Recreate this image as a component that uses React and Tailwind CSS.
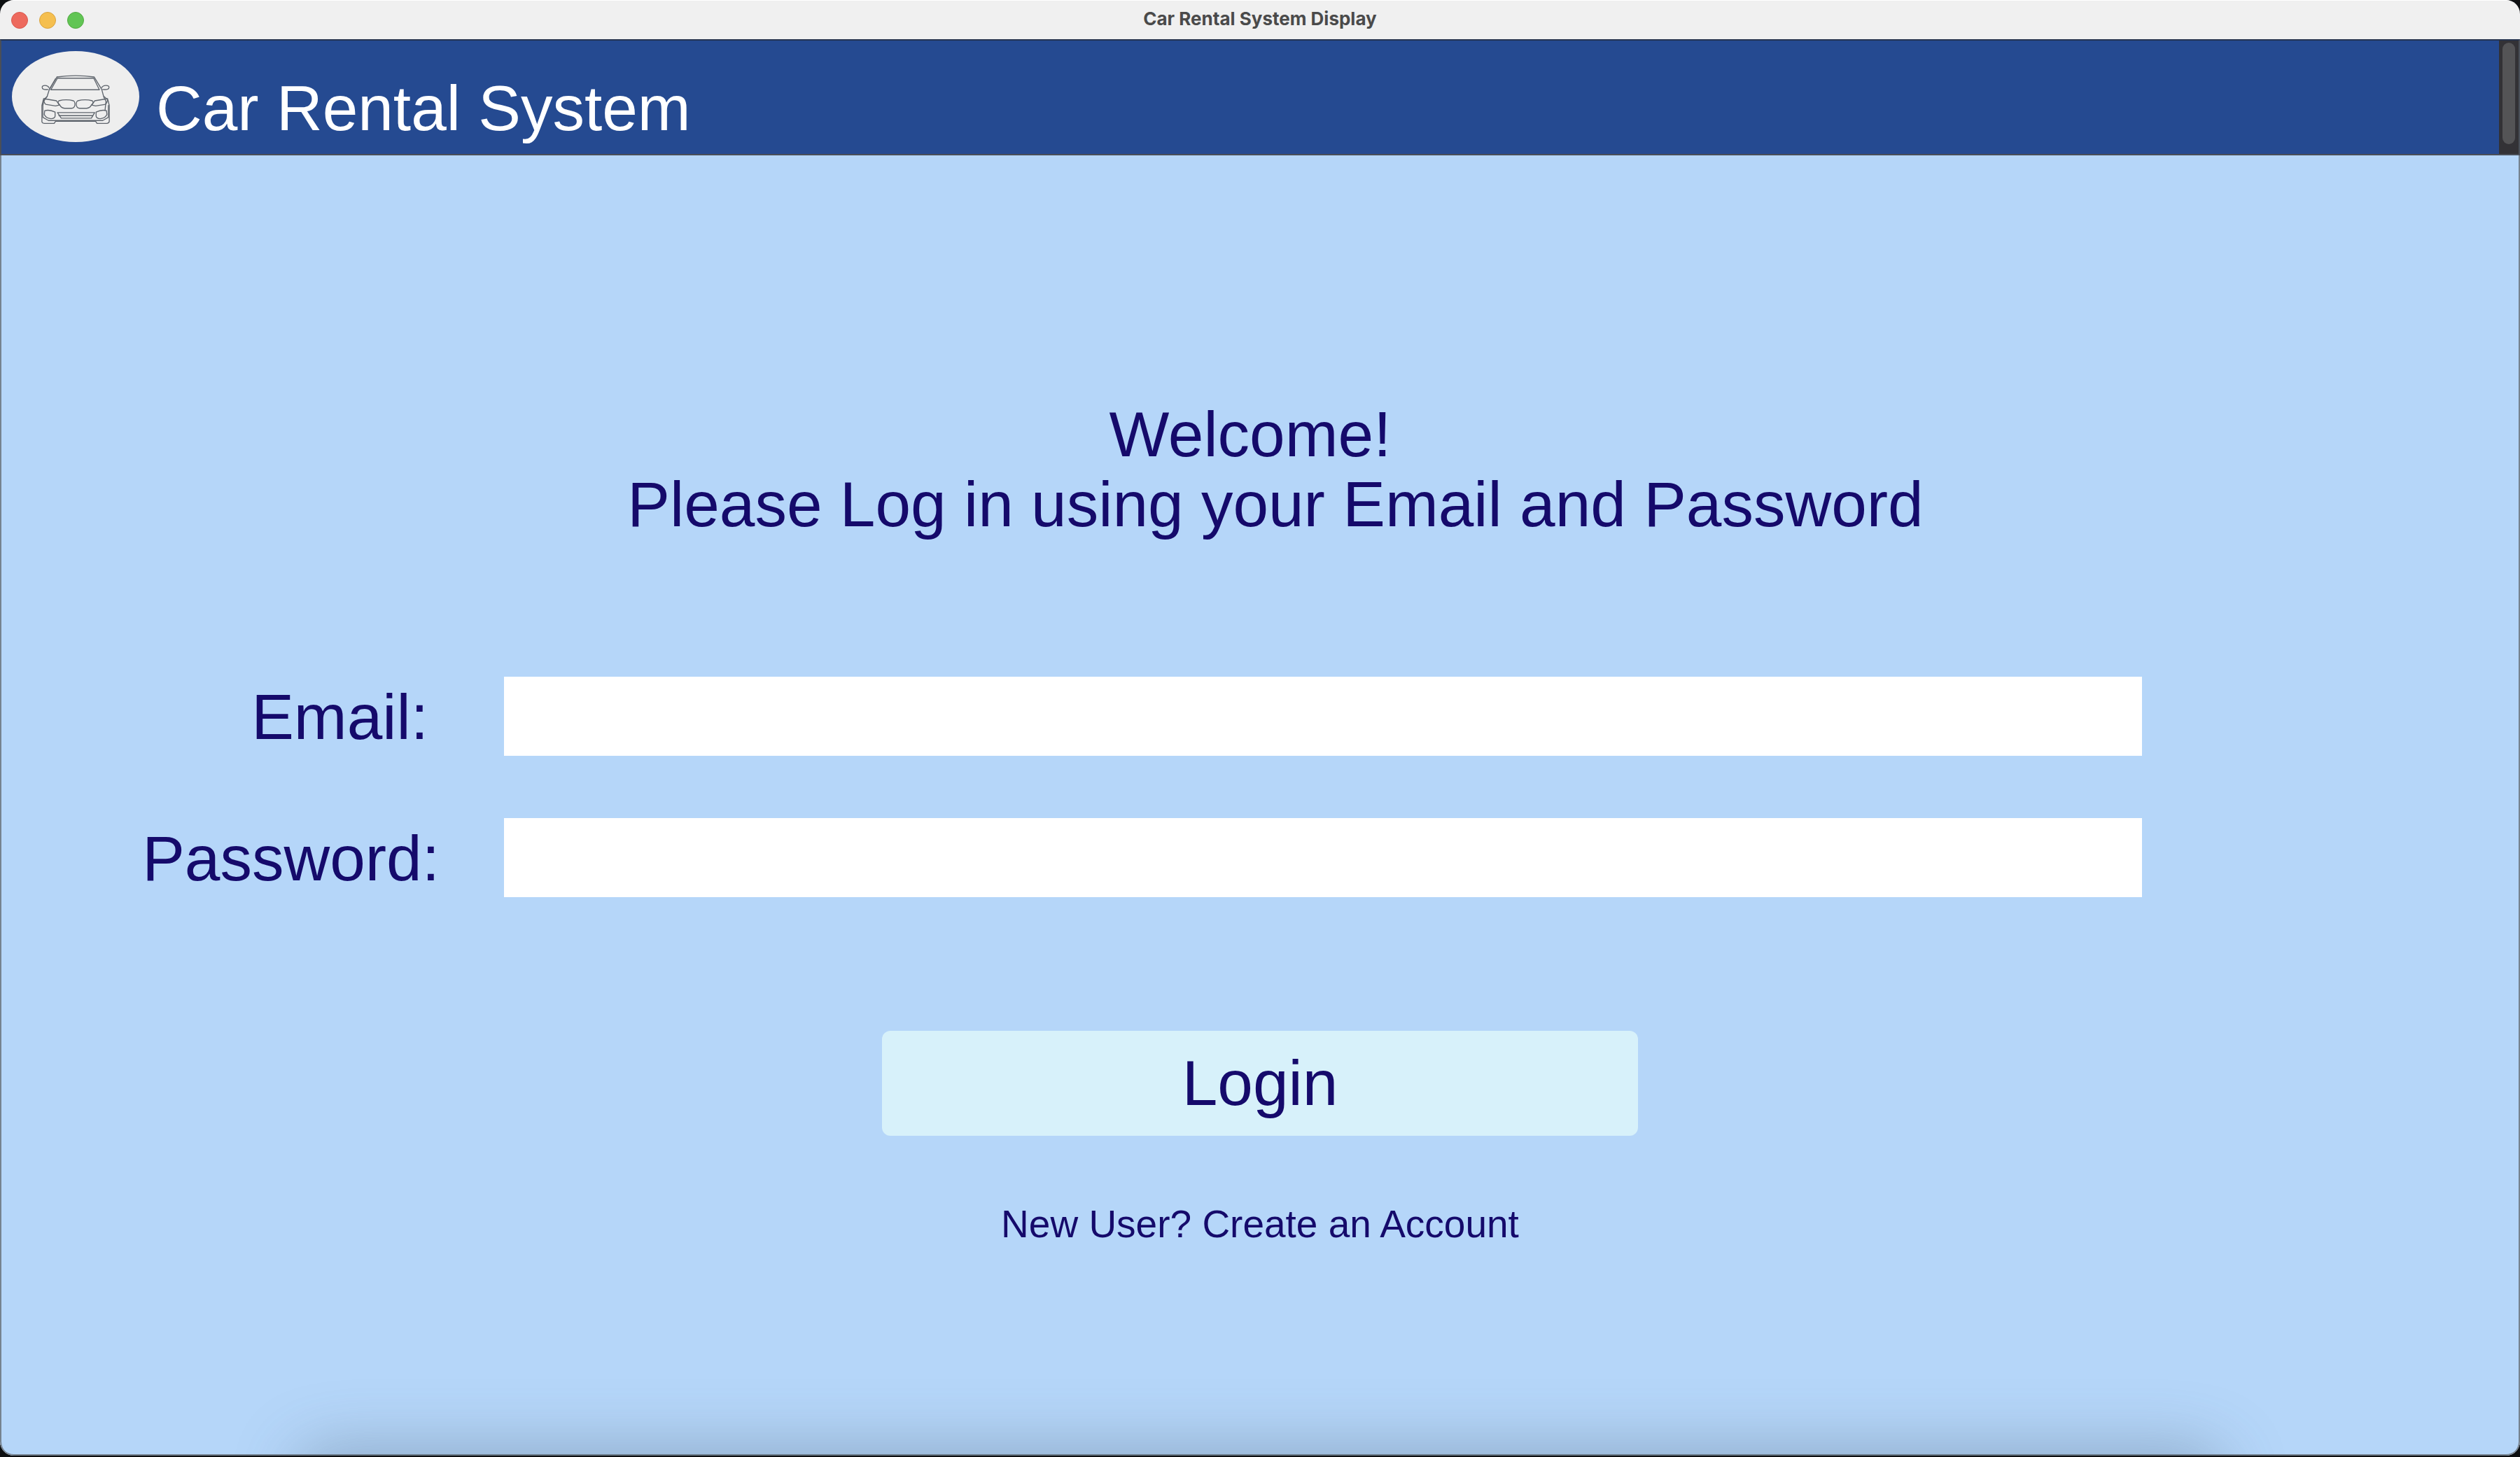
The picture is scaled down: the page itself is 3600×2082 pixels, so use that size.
function CarLogo() {
  return (
    <div className="flex h-[130px] w-[182px] shrink-0 items-center justify-center rounded-[50%] bg-[#eeeeee]">
      <svg viewBox="0 0 290 208" className="mt-2 h-[70px] w-[98px]" fill="none" stroke="#5f656d" strokeWidth="4" strokeLinejoin="round" strokeLinecap="round" role="img" aria-label="Car">
        <path d="M66 9 Q145 -2 224 9 L256 62 L265 95 L274 112 L270 150" />
        <path d="M66 9 L34 60 L24 92 L10 112 L6 130" />
        <path d="M68 14 H222 L246 63 H40 Z" />
        <path d="M60 16 L34 62" />
        <path d="M32 54 C26 42 4 42 3 52 C3 60 8 64 28 62" />
        <path d="M256 54 C262 42 286 42 287 52 C287 60 282 64 260 62" />
        <path d="M24 92 L8 106 L2 130 V200 Q4 206 12 206 H54 L60 197 H230 L236 206 H278 Q288 204 288 196 V130 L282 106 L266 92" />
        <path d="M9 101 L64 110 L76 128 L60 132 L18 125 Q10 118 9 101 Z" />
        <path d="M281 101 L226 110 L214 128 L230 132 L272 125 Q280 118 281 101 Z" />
        <path d="M74 110 Q105 102 136 110 Q143 114 142 128 Q140 141 128 142 H98 Q84 140 78 128 Q66 116 74 110 Z" />
        <path d="M216 110 Q185 102 154 110 Q147 114 148 128 Q150 141 162 142 H192 Q206 140 212 128 Q224 116 216 110 Z" />
        <path d="M68 160 H226 L212 184 H84 Z" />
        <path d="M74 173 H218" />
        <path d="M14 152 Q34 146 58 158 V176 Q56 186 40 186 Q18 184 12 168 Z" />
        <path d="M276 152 Q256 146 232 158 V176 Q234 186 250 186 Q272 184 278 168 Z" />
        <path d="M6 130 V180 L30 194 H260 L284 180 V130" />
      </svg>
    </div>
  );
}

function Field({ id, label, type, labelClass }) {
  return (
    <div className="flex h-[113px] items-center">
      <label htmlFor={id} className={`w-1/5 shrink-0 pt-[2px] text-right ${labelClass}`}>
        {label}
      </label>
      <input id={id} type={type} className="h-full w-[65%] bg-white px-6 outline-none" />
    </div>
  );
}

export default function App() {
  return (
    <div className="min-h-screen bg-[#0d0f11] pb-[2px] font-['Liberation_Sans',Arial,sans-serif]">
      <div className="flex min-h-[2080px] flex-col overflow-hidden rounded-[20px] bg-[#f0f0f0]">
        <div className="grid h-14 shrink-0 grid-cols-3 items-center border-t border-white px-4">
          <div className="flex gap-4">
            <button aria-label="Close" className="size-6 rounded-full border border-[#d9584e] bg-[#ed6a5e]" />
            <button aria-label="Minimize" className="size-6 rounded-full border border-[#d8a23f] bg-[#f5bf4f]" />
            <button aria-label="Zoom" className="size-6 rounded-full border border-[#52a842] bg-[#61c554]" />
          </div>
          <div className="pb-1 text-center font-['Inter',sans-serif] text-[26px] leading-8 font-bold text-[#4a4a4a]">
            Car Rental System Display
          </div>
        </div>

        <header className="flex h-[166px] shrink-0 border-2 border-[#4a4f58] border-t-[#26344f] bg-[#254a91]">
          <div className="flex flex-1 gap-6 pt-[15px] pl-[15px]">
            <CarLogo />
            <h1 className="pt-[30px] text-[91px] leading-[104px] text-white">Car Rental System</h1>
          </div>
          <div className="w-[28px] bg-[#333236] px-[5px] pt-[3px]">
            <div className="h-[145px] rounded-full bg-[#545456]" />
          </div>
        </header>

        <main className="relative flex-1 overflow-hidden rounded-b-[20px] bg-[#b5d6f9] text-[91px] leading-[100px] text-[#150a6b] shadow-[inset_2px_0_0_#75828f,inset_-2px_0_0_#75828f,inset_0_-2px_0_#75828f]">
          <div className="pt-[349px] text-center">
            <p className="pr-7">Welcome!</p>
            <p className="pl-11">Please Log in using your Email and Password</p>
          </div>
          <form onSubmit={(e) => e.preventDefault()}>
            <div className="flex flex-col gap-[89px] pt-[196px]">
              <Field id="email" label="Email:" type="email" labelClass="pr-[108px]" />
              <Field id="password" label="Password:" type="password" labelClass="pr-[92px]" />
            </div>
            <button className="mx-auto mt-[191px] block h-[150px] w-[30%] rounded-xl bg-[#d7f1fa]">Login</button>
          </form>
          <a href="#create" className="mx-auto mt-[94px] block w-fit text-[55px] leading-[64px]">
            New User? Create an Account
          </a>
          <div className="pointer-events-none absolute inset-x-[12%] top-full h-20 rounded-[40px] shadow-[0_0_90px_10px_rgba(70,90,110,0.36)]" />
        </main>
      </div>
    </div>
  );
}
